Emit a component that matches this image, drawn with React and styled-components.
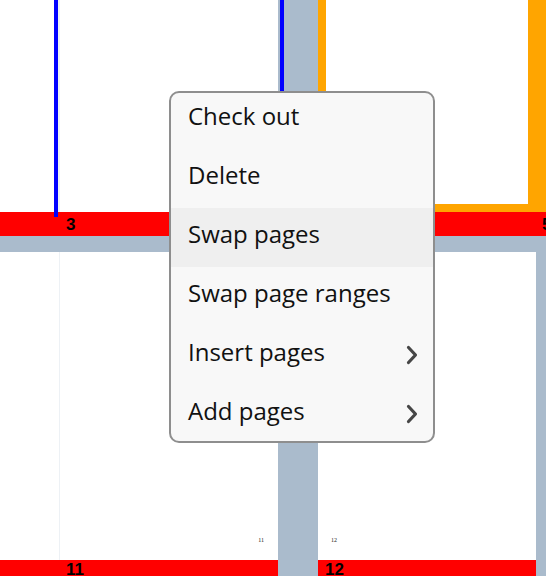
import React from "react";
import styled, { createGlobalStyle } from "styled-components";

const GlobalStyle = createGlobalStyle`
  html, body {
    margin: 0;
    padding: 0;
    background: #aabbcc;
  }
`;

const Viewport = styled.div`
  position: relative;
  width: 546px;
  height: 576px;
  overflow: hidden;
  background: #aabbcc;
  font-family: "Liberation Sans", Arial, sans-serif;
`;

const TopGrid = styled.div`
  display: grid;
  grid-template-columns: 278px 40px 228px;
  grid-template-rows: 212px 24px;
  margin-bottom: 16px;
`;

const BottomGrid = styled.div`
  display: grid;
  grid-template-columns: 278px 40px 218px 10px;
  grid-template-rows: 308px 16px;
`;

const Page = styled.div`
  display: flex;
  background: #ffffff;
  padding-left: ${({ $inset }) => $inset || 0}px;
`;

const BlueEdge = styled.div`
  position: relative;
  z-index: 1;
  width: 4px;
  height: 217px;
  background: #0000ff;
`;

const Sheet = styled.div`
  flex: 1;
  display: flex;
  align-items: flex-end;
  justify-content: ${({ $align }) => ($align === "left" ? "flex-start" : "flex-end")};
  padding: 0 ${({ $pr }) => $pr || 0}px 17px ${({ $pl }) => $pl || 0}px;
  border-left: ${({ $edge }) => $edge || 0}px solid #edf1f5;
`;

const Gap = styled.div`
  display: flex;
  padding-left: 2px;
  background: #aabbcc;
`;

const SelectedPage = styled.div`
  background: #ffffff;
  border-left: 8px solid #ffa500;
  border-right: 18px solid #ffa500;
  border-bottom: 8px solid #ffa500;
`;

const LabelBar = styled.div`
  grid-column: 1 / -1;
  display: grid;
  grid-template-columns: 536px 10px;
  background: #ff0000;
`;

const Label = styled.div`
  padding-left: ${({ $pl }) => $pl}px;
  padding-top: ${({ $pt }) => $pt || 0}px;
  font-size: 17px;
  font-weight: 700;
  line-height: 1;
  color: #000;
  white-space: nowrap;
  background: ${({ $red }) => ($red ? "#ff0000" : "transparent")};
`;

const Folio = styled.span`
  font-family: "Liberation Serif", "Times New Roman", serif;
  font-size: 6px;
  line-height: 1;
  color: #222;
`;

const Menu = styled.ul`
  position: absolute;
  left: 169px;
  top: 91px;
  width: 266px;
  height: 352px;
  box-sizing: border-box;
  margin: 0;
  padding: 0;
  list-style: none;
  background: #f8f8f8;
  border: 2px solid #8e8e8e;
  border-radius: 10px;
  overflow: hidden;
  font-family: "Open Sans", "Noto Sans", sans-serif;
  z-index: 5;
`;

const Item = styled.li`
  display: flex;
  align-items: flex-start;
  justify-content: space-between;
  height: 59px;
  box-sizing: border-box;
  padding: 10px 15px 0 17px;
  font-size: 24px;
  line-height: 32px;
  color: #111;
  background: ${({ $active }) => ($active ? "#efefef" : "transparent")};
  cursor: default;

  &:first-child {
    margin-top: -3px;
  }
`;

const Chevron = styled.svg`
  align-self: center;
  margin-bottom: 12px;
  width: 12px;
  height: 20px;
  color: #464646;
`;

const Arrow = () => (
  <Chevron viewBox="0 0 12 20" fill="none">
    <path d="M2.5 2.5 L9.5 10 L2.5 17.5" stroke="currentColor" strokeWidth="3.2" strokeLinecap="round" strokeLinejoin="round" />
  </Chevron>
);

const items = [
  { label: "Check out" },
  { label: "Delete" },
  { label: "Swap pages", active: true },
  { label: "Swap page ranges" },
  { label: "Insert pages", sub: true },
  { label: "Add pages", sub: true },
];

export default function App() {
  return (
    <Viewport>
      <GlobalStyle />

      <TopGrid>
        <Page $inset={54}>
          <BlueEdge />
          <Sheet $edge={2} />
        </Page>
        <Gap>
          <BlueEdge />
        </Gap>
        <SelectedPage />
        <LabelBar>
          <Label $pl={66} $pt={4}>3</Label>
          <Label $pl={6} $pt={4}>5</Label>
        </LabelBar>
      </TopGrid>

      <BottomGrid>
        <Page $inset={59}>
          <Sheet $edge={1} $pr={14}>
            <Folio>11</Folio>
          </Sheet>
        </Page>
        <div />
        <Page>
          <Sheet $align="left" $pl={13}>
            <Folio>12</Folio>
          </Sheet>
        </Page>
        <div />
        <Label $red $pl={66} $pt={1}>11</Label>
        <div />
        <Label $red $pl={7} $pt={1}>12</Label>
        <div />
      </BottomGrid>

      <Menu>
        {items.map((it) => (
          <Item key={it.label} $active={it.active}>
            <span>{it.label}</span>
            {it.sub && <Arrow />}
          </Item>
        ))}
      </Menu>
    </Viewport>
  );
}
